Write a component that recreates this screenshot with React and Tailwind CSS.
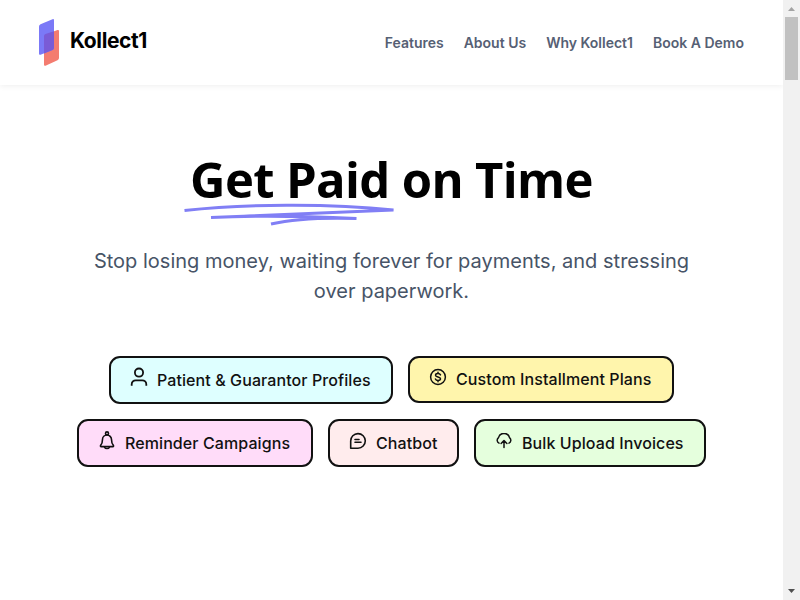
const icon = {
  fill: 'none',
  stroke: '#111',
  strokeWidth: 1.6,
  strokeLinecap: 'round',
  strokeLinejoin: 'round',
};

function UserIcon() {
  return (
    <svg width="18" height="20" viewBox="0 0 18 20" {...icon} strokeWidth="1.8" strokeLinecap="butt">
      <circle cx="9" cy="5.6" r="4.1" />
      <path d="M1.700 18.800v-1.500a4 4 0 0 1 4-4h6.600a4 4 0 0 1 4 4v1.500" />
    </svg>
  );
}

function DollarIcon() {
  return (
    <svg width="18" height="18" viewBox="0 0 18 18" {...icon} strokeWidth="1.5">
      <circle cx="9" cy="9" r="7.4" />
      <path d="M11.500 6.900C11.100 6 10.200 5.500 9 5.500c-1.500 0-2.500.7-2.500 1.700C6.500 8.300 7.600 8.700 9 9c1.400.3 2.500.7 2.500 1.800 0 1-1.100 1.700-2.500 1.700-1.300 0-2.200-.6-2.600-1.500M9 4.200v1M9 12.800v1" />
    </svg>
  );
}

function BellIcon() {
  return (
    <svg width="16" height="19" viewBox="0 0 16 19" {...icon}>
      <circle cx="8" cy="2.400" r="1.500" />
      <path d="M8 4a4.500 4.500 0 0 0-4.500 4.500c0 3.100-.7 4.700-1.900 5.900-.4.500-.1 1.200.5 1.200h11.800c.6 0 .9-.7.5-1.200-1.200-1.200-1.900-2.800-1.900-5.900A4.500 4.500 0 0 0 8 4z" />
      <path d="M5.600 16.200a2.500 1.900 0 0 0 4.800 0" />
    </svg>
  );
}

function ChatIcon() {
  return (
    <svg width="18" height="18" viewBox="0 0 18 18" {...icon}>
      <path d="M1.700 16.200V9A7.300 7.300 0 1 1 9 16.200z" />
      <path d="M6 7.500h4M6 10.300h6" />
    </svg>
  );
}

function UploadIcon() {
  return (
    <svg width="18" height="16" viewBox="0 0 18 16" {...icon} strokeWidth="1.500">
      <path d="M4 10.200A3.300 3.300 0 0 1 3.500 4.600a5.700 5.700 0 0 1 11 0A3.300 3.300 0 0 1 14 10.200" />
      <path d="M9 14.500V7.800M6.100 10.500 9 7.600l2.900 2.900" />
    </svg>
  );
}

function Chip({ className, iconClass, label, labelClass, children }) {
  return (
    <div className={`flex shrink-0 items-start rounded-[11px] border-2 border-[#111] ${className}`}>
      <span className={`shrink-0 ${iconClass}`}>{children}</span>
      <span className={`whitespace-nowrap text-base leading-6 font-medium tracking-[0.090px] text-[#111] ${labelClass}`}>{label}</span>
    </div>
  );
}

function Header() {
  return (
    <header className="flex h-[85px] items-start justify-between bg-white pr-[39px] pl-[38px] shadow-[0_1px_6px_rgba(0,0,0,0.07)]">
      <div className="flex pt-[18px]">
        <svg width="22" height="49" viewBox="0 0 22 49">
          <path d="M7.500 16.500 19.500 12Q21 11.500 21 13v27q0 1.600-1.500 2.200L7.500 47.700Q6 48.200 6 46.700V18Q6 17 7.500 16.500z" fill="#f47c70" />
          <path d="M2.500 6.300 14.500 1.200Q16 .7 16 2.200V30q0 1.500-1.500 2.100L2.500 36.700Q1 37.200 1 35.700V8.500Q1 7 2.500 6.300z" fill="#7b79f7" />
          <path d="M6 18q0-1.500 1.500-2L16 13.200V30q0 1.500-1.500 2.100L6 35.400z" fill="#7a5bd6" />
        </svg>
        <span className="ml-[10px] pt-[8px] font-['Inter',sans-serif] text-[21px] leading-[30px] font-bold tracking-[-0.400px] text-black">Kollect1</span>
      </div>
      <nav className="flex gap-5 pt-[33px] text-sm leading-5 font-semibold text-[#566074]">
        <a>Features</a>
        <a>About Us</a>
        <a>Why Kollect1</a>
        <a>Book A Demo</a>
      </nav>
    </header>
  );
}

function Scrollbar() {
  return (
    <div className="flex h-full w-[17px] shrink-0 flex-col items-center bg-[#f1f1f1]">
      <svg width="17" height="17" viewBox="0 0 17 17"><path d="M5 11h7L8.500 7z" fill="#a3a3a3" /></svg>
      <div className="h-[63px] w-[13px] bg-[#c1c1c1]" />
      <svg className="mt-auto" width="17" height="17" viewBox="0 0 17 17"><path d="M5 6h7L8.500 10z" fill="#505050" /></svg>
    </div>
  );
}

export default function App() {
  return (
    <div className="flex h-[600px] w-[800px] overflow-hidden bg-white font-['Inter',sans-serif]">
      <div className="w-[783px]">
        <Header />
        <main className="flex flex-col items-center">
          <h1 className="relative mt-[63px] h-[64px] font-['Open_Sans','Noto_Sans',sans-serif] text-[49px] leading-[62px] font-bold tracking-[-0.650px] whitespace-nowrap text-black">
            Get Paid on Time
            <svg className="absolute top-[54px] left-[-7px]" width="214" height="24" viewBox="0 0 214 24" fill="none" stroke="#817ff5" strokeWidth="3" strokeLinejoin="bevel">
              <path d="M1.500 8.500C60 2 145 1 210.500 8L28 15.500C80 13 130 14.500 173.500 16.500C140 15.500 110 17 88 22" />
            </svg>
          </h1>
          <p className="mt-[34px] text-center text-xl leading-[30px] tracking-[0.010px] text-[#475467]">
            Stop losing money, waiting forever for payments, and stressing
            <br />
            over paperwork.
          </p>
          <div className="mt-[50px] flex items-start gap-[15px]">
            <Chip className="h-[48px] w-[284px] bg-[#deffff] pl-[19px]" iconClass="mt-[9px]" labelClass="ml-[9px] mt-[10px]" label="Patient & Guarantor Profiles"><UserIcon /></Chip>
            <Chip className="h-[47px] w-[266px] bg-[#fff5ac]  pl-[19px]" iconClass="mt-[10px]" labelClass="ml-[9px] mt-[9px]" label="Custom Installment Plans"><DollarIcon /></Chip>
          </div>
          <div className="mt-[15px] flex items-start gap-[15px]">
            <Chip className="h-[48px] w-[236px] bg-[#ffdcf9] pl-[20px]" iconClass="mt-[10px]" labelClass="ml-[10px] mt-[10px]" label="Reminder Campaigns"><BellIcon /></Chip>
            <Chip className="h-[48px] w-[131px] bg-[#ffeced] pl-[19px]" iconClass="mt-[11px]" labelClass="ml-[9px] mt-[10px]" label="Chatbot"><ChatIcon /></Chip>
            <Chip className="h-[48px] w-[232px] bg-[#e5ffdd] pl-[19px]" iconClass="mt-[12px]" labelClass="ml-[9px] mt-[10px]" label="Bulk Upload Invoices"><UploadIcon /></Chip>
          </div>
        </main>
      </div>
      <Scrollbar />
    </div>
  );
}
